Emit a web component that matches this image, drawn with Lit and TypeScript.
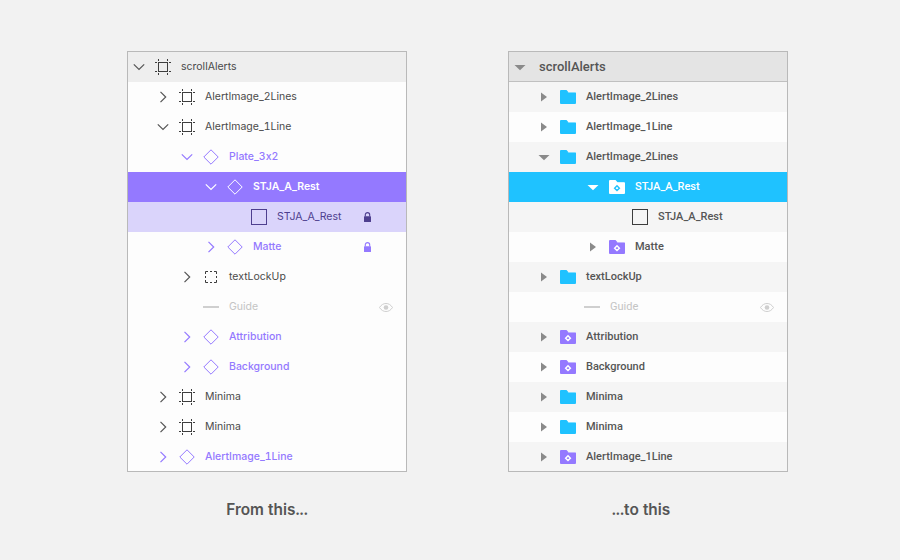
import { LitElement, html, css, svg } from "lit";
import { customElement } from "lit/decorators.js";

type Tone = "dark" | "purple" | "white" | "muted" | "deep";
interface Row {
  label: string;
  offset: number;
  toggle?: "open" | "closed";
  icon: string;
  tone?: Tone;
  state?: string;
  trail?: "lock" | "eye";
}

const frame = (c: string) => svg`<svg width="16" height="16" viewBox="0 0 16 16" fill="none" stroke="${c}">
  <rect x="3.500" y="3.500" width="9" height="9"/>
  <path d="M3.500 0v2M12.500 0v2M3.500 14v2M12.500 14v2M0 3.500h2M0 12.500h2M14 3.500h2M14 12.500h2"/>
</svg>`;
const diamond = (c: string) => svg`<svg width="16" height="16" viewBox="0 0 16 16" fill="none" stroke="${c}"><path d="M8 .8 15.200 8 8 15.200 .8 8Z"/></svg>`;
const square = (c: string) => svg`<svg width="16" height="16" viewBox="0 0 16 16" fill="none" stroke="${c}"><rect x=".5" y=".5" width="15" height="15"/></svg>`;
const dashed = (c: string) => svg`<svg width="12" height="12" viewBox="0 0 12 12" fill="none" stroke="${c}"><path d="M.5 3V.5H3M5 .5h2M9 .5h2.500V3M11.500 5v2M11.500 9v2.500H9M7 11.500H5M3 11.500H.5V9M.5 7V5"/></svg>`;
const guide = (c: string) => svg`<svg width="16" height="2" viewBox="0 0 16 2"><rect width="16" height="1.600" y=".2" fill="${c}"/></svg>`;
const folder = (c: string, mark?: string) => svg`<svg width="16" height="14" viewBox="0 0 16 14">
  <path d="M1 0h5.500l2 2.200H15a1 1 0 0 1 1 1V13a1 1 0 0 1-1 1H1a1 1 0 0 1-1-1V1a1 1 0 0 1 1-1Z" fill="${c}"/>
  <path d="M7.500 2.200H15a1 1 0 0 1 1 .9H8.300Z" fill="#fff" opacity=".35"/>
  ${mark ? svg`<path d="M8 5.800 10.400 8.200 8 10.600 5.600 8.200Z" fill="none" stroke="${mark}" stroke-width="1.400"/>` : ""}
</svg>`;
const lock = (c: string) => svg`<svg width="7" height="10" viewBox="0 0 7 10"><path d="M1.300 4.500V2.800a2.200 2.200 0 0 1 4.400 0V4.500" fill="none" stroke="${c}" stroke-width="1.100"/><rect y="4.200" width="7" height="5.800" rx=".5" fill="${c}"/></svg>`;
const eye = (c: string) => svg`<svg width="14" height="9" viewBox="0 0 14 9"><path d="M.5 4.500C2.300 1.700 4.500.5 7 .5s4.700 1.200 6.500 4c-1.800 2.800-4 4-6.500 4S2.300 7.300.5 4.500Z" fill="none" stroke="${c}"/><circle cx="7" cy="4.500" r="2.300" fill="${c}"/></svg>`;

const chevron = (open: boolean, c: string) => svg`<svg width="12" height="12" viewBox="0 0 12 12" fill="none" stroke="${c}" stroke-width="1.200"><path d="${open ? "M.8 3.300 6 8.500l5.200-5.200" : "M3.500.8 8.700 6l-5.200 5.200"}"/></svg>`;
const caret = (open: boolean, c: string) => svg`<svg width="12" height="12" viewBox="0 0 12 12" fill="${c}"><path d="${open ? "M.5 4h11L6 9.300Z" : "M3 1.500v9L9 6Z"}"/></svg>`;

const PURPLE = "#9479ff";
const BLUE = "#1fc2ff";

function leftIcon(name: string, tone: Tone) {
  const c = tone === "white" ? "#fff" : tone === "purple" ? PURPLE : tone === "deep" ? "#4e3f8f" : "#3d3d3d";
  if (name === "frame") return frame(c);
  if (name === "diamond") return diamond(c);
  if (name === "square") return square(c);
  if (name === "dashed") return dashed(c);
  if (name === "guide") return guide("#c4c4c4");
  return "";
}
function rightIcon(name: string) {
  if (name === "folder") return folder(BLUE);
  if (name === "symbol") return folder(PURPLE, "#fff");
  if (name === "symbol-white") return folder("#fff", BLUE);
  if (name === "square") return square("#3d3d3d");
  if (name === "guide") return guide("#c4c4c4");
  return "";
}

const LEFT: Row[] = [
  { label: "scrollAlerts", offset: 0, toggle: "open", icon: "frame", state: "head" },
  { label: "AlertImage_2Lines", offset: 24, toggle: "closed", icon: "frame" },
  { label: "AlertImage_1Line", offset: 24, toggle: "open", icon: "frame" },
  { label: "Plate_3x2", offset: 48, toggle: "open", icon: "diamond", tone: "purple" },
  { label: "STJA_A_Rest", offset: 72, toggle: "open", icon: "diamond", tone: "white", state: "selected" },
  { label: "STJA_A_Rest", offset: 96, icon: "square", tone: "deep", state: "child", trail: "lock" },
  { label: "Matte", offset: 72, toggle: "closed", icon: "diamond", tone: "purple", trail: "lock" },
  { label: "textLockUp", offset: 48, toggle: "closed", icon: "dashed" },
  { label: "Guide", offset: 48, icon: "guide", tone: "muted", trail: "eye" },
  { label: "Attribution", offset: 48, toggle: "closed", icon: "diamond", tone: "purple" },
  { label: "Background", offset: 48, toggle: "closed", icon: "diamond", tone: "purple" },
  { label: "Minima", offset: 24, toggle: "closed", icon: "frame" },
  { label: "Minima", offset: 24, toggle: "closed", icon: "frame" },
  { label: "AlertImage_1Line", offset: 24, toggle: "closed", icon: "diamond", tone: "purple" },
];

const RIGHT: Row[] = [
  { label: "AlertImage_2Lines", offset: 24, toggle: "closed", icon: "folder" },
  { label: "AlertImage_1Line", offset: 24, toggle: "closed", icon: "folder" },
  { label: "AlertImage_2Lines", offset: 24, toggle: "open", icon: "folder" },
  { label: "STJA_A_Rest", offset: 73, toggle: "open", icon: "symbol-white", tone: "white", state: "selected-b" },
  { label: "STJA_A_Rest", offset: 96, icon: "square" },
  { label: "Matte", offset: 73, toggle: "closed", icon: "symbol" },
  { label: "textLockUp", offset: 24, toggle: "closed", icon: "folder" },
  { label: "Guide", offset: 48, icon: "guide", tone: "muted", trail: "eye" },
  { label: "Attribution", offset: 24, toggle: "closed", icon: "symbol" },
  { label: "Background", offset: 24, toggle: "closed", icon: "symbol" },
  { label: "Minima", offset: 24, toggle: "closed", icon: "folder" },
  { label: "Minima", offset: 24, toggle: "closed", icon: "folder" },
  { label: "AlertImage_1Line", offset: 24, toggle: "closed", icon: "symbol" },
];

@customElement("app-root")
export class AppRoot extends LitElement {
  static styles = css`
    :host {
      display: block;
      width: 900px;
      height: 560px;
      background: #f2f2f2;
      font-family: Inter, "Liberation Sans", sans-serif;
      font-feature-settings: "calt" 0, "tnum" 1;
      overflow: hidden;
    }
    .page {
      display: flex;
      gap: 101px;
      padding: 51px 0 0 127px;
    }
    .col {
      display: flex;
      flex-direction: column;
      width: 280px;
    }
    .panel {
      height: 421px;
      box-sizing: border-box;
      border: 1px solid #b9b9b9;
      background: #fdfdfd;
      display: flex;
      flex-direction: column;
      overflow: hidden;
    }
    .caption {
      margin-top: 28px;
      text-align: center;
      font-size: 15.4px;
      font-weight: 600;
      line-height: 20px;
      color: #555;
    }
    .caption.shifted {
      padding-right: 14px;
    }
    .row {
      flex: none;
      height: 30px;
      display: flex;
      align-items: center;
      font-size: 10.5px;
      color: #4a4a4a;
    }
    .indent {
      flex: none;
    }
    .toggle {
      width: 16px;
      height: 16px;
      flex: none;
      margin-left: 3px;
      display: flex;
      align-items: center;
      justify-content: center;
    }
    .icon {
      width: 16px;
      height: 16px;
      flex: none;
      margin-left: 8px;
      display: flex;
      align-items: center;
      justify-content: center;
    }
    .label {
      margin-left: 10px;
      margin-bottom: 2px;
    }
    .trail {
      margin-left: auto;
      display: flex;
      align-items: center;
      justify-content: center;
      width: 14px;
      margin-right: 13px;
    }
    .trail.locked {
      width: 15px;
      margin-right: 31px;
    }
    .head { background: #eeeeee; }
    .selected { background: #9479ff; }
    .child { background: #dad4fb; }
    .tone-purple { color: #9479ff; font-weight: 500; }
    .tone-white { color: #fff; font-weight: 600; }
    .tone-muted { color: #c4c4c4; }
    .tone-deep { color: #4e3f8f; }
    .b .row {
      font-family: Roboto, Inter, sans-serif;
      font-size: 11px;
      font-weight: 500;
      color: #555;
    }
    .b .row:nth-child(even) { background: #f5f5f5; }
    .b .row:nth-child(odd) { background: #fdfdfd; }
    .b .row.selected-b { background: #1fc2ff; color: #fff; }
    .b .row.tone-muted { color: #c4c4c4; font-weight: 400; }
    .header {
      flex: none;
      height: 30px;
      box-sizing: border-box;
      border-bottom: 1px solid #c0c0c0;
      background: #e4e4e4;
      display: flex;
      align-items: center;
      font-family: Roboto, Inter, sans-serif;
      font-weight: 500;
      font-size: 13px;
      color: #555;
      padding-left: 5px;
    }
    .header .label {
      margin-left: 13px;
      margin-bottom: 0;
    }
  `;

  private renderTrail(r: Row) {
    if (r.trail === "lock") {
      return html`<span class="trail locked">${lock(r.tone === "deep" ? "#4e3f8f" : PURPLE)}</span>`;
    }
    if (r.trail === "eye") return html`<span class="trail">${eye("#cfcfcf")}</span>`;
    return "";
  }

  private renderLeft(r: Row) {
    const tone = r.tone ?? "dark";
    const chev = tone === "white" ? "#fff" : tone === "purple" ? PURPLE : "#555";
    return html`<div class="row ${r.state ?? ""} tone-${tone}">
      <span class="indent" style="width:${r.offset}px"></span>
      <span class="toggle">${r.toggle ? chevron(r.toggle === "open", chev) : ""}</span>
      <span class="icon">${leftIcon(r.icon, tone)}</span>
      <span class="label">${r.label}</span>
      ${this.renderTrail(r)}
    </div>`;
  }

  private renderRight(r: Row) {
    const tone = r.tone ?? "dark";
    return html`<div class="row ${r.state ?? ""} tone-${tone}">
      <span class="indent" style="width:${r.offset}px"></span>
      <span class="toggle">${r.toggle ? caret(r.toggle === "open", tone === "white" ? "#fff" : "#8a8a8a") : ""}</span>
      <span class="icon">${rightIcon(r.icon)}</span>
      <span class="label">${r.label}</span>
      ${this.renderTrail(r)}
    </div>`;
  }

  render() {
    return html`<div class="page">
      <div class="col">
        <div class="panel a">${LEFT.map((r) => this.renderLeft(r))}</div>
        <div class="caption">From this...</div>
      </div>
      <div class="col">
        <div class="panel b">
          <div class="header">${caret(true, "#8a8a8a")}<span class="label">scrollAlerts</span></div>
          ${RIGHT.map((r) => this.renderRight(r))}
        </div>
        <div class="caption shifted">...to this</div>
      </div>
    </div>`;
  }
}
